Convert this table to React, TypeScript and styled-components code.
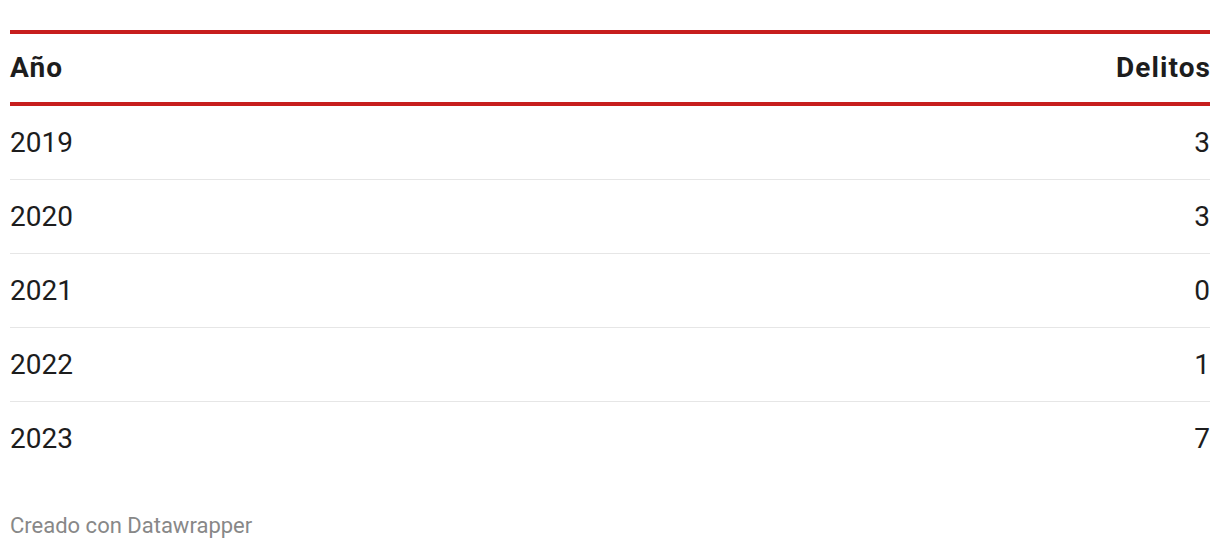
import React from "react";
import styled, { createGlobalStyle } from "styled-components";

const GlobalStyle = createGlobalStyle`
  body {
    margin: 0;
    background: #ffffff;
    font-family: Roboto, "Liberation Sans", Arial, sans-serif;
  }
`;

const StyledPage = styled.div`
  padding: 30px 10px 0;
  width: 1200px;
`;

const StyledTable = styled.div`
  display: flex;
  flex-direction: column;
`;

const StyledHeadRow = styled.div`
  display: flex;
  justify-content: space-between;
  align-items: center;
  box-sizing: border-box;
  height: 76px;
  padding: 0 0 2px;
  border-top: 4px solid #c71e1d;
  border-bottom: 4px solid #c71e1d;
  font-size: 28px;
  font-weight: 700;
  letter-spacing: 1.1px;
  color: #1d1d1d;
`;

const StyledHeadCell = styled.span`
  margin-right: -1.1px;
`;

const StyledRow = styled.div<{ $last?: boolean }>`
  display: flex;
  justify-content: space-between;
  align-items: center;
  height: 73px;
  border-bottom: 1px solid ${({ $last }) => ($last ? "transparent" : "#e6e6e6")};
  font-size: 28px;
  color: #1d1d1d;
`;

const StyledFooter = styled.div`
  margin: 37px 0 0;
  font-size: 22px;
  line-height: 26px;
  color: #888888;
`;

const rows = [
  { year: "2019", value: 3 },
  { year: "2020", value: 3 },
  { year: "2021", value: 0 },
  { year: "2022", value: 1 },
  { year: "2023", value: 7 },
];

export default function App() {
  return (
    <StyledPage>
      <GlobalStyle />
      <StyledTable>
        <StyledHeadRow>
          <StyledHeadCell>Año</StyledHeadCell>
          <StyledHeadCell>Delitos</StyledHeadCell>
        </StyledHeadRow>
        {rows.map((row, i) => (
          <StyledRow key={row.year} $last={i === rows.length - 1}>
            <span>{row.year}</span>
            <span>{row.value}</span>
          </StyledRow>
        ))}
      </StyledTable>
      <StyledFooter>Creado con Datawrapper</StyledFooter>
    </StyledPage>
  );
}
